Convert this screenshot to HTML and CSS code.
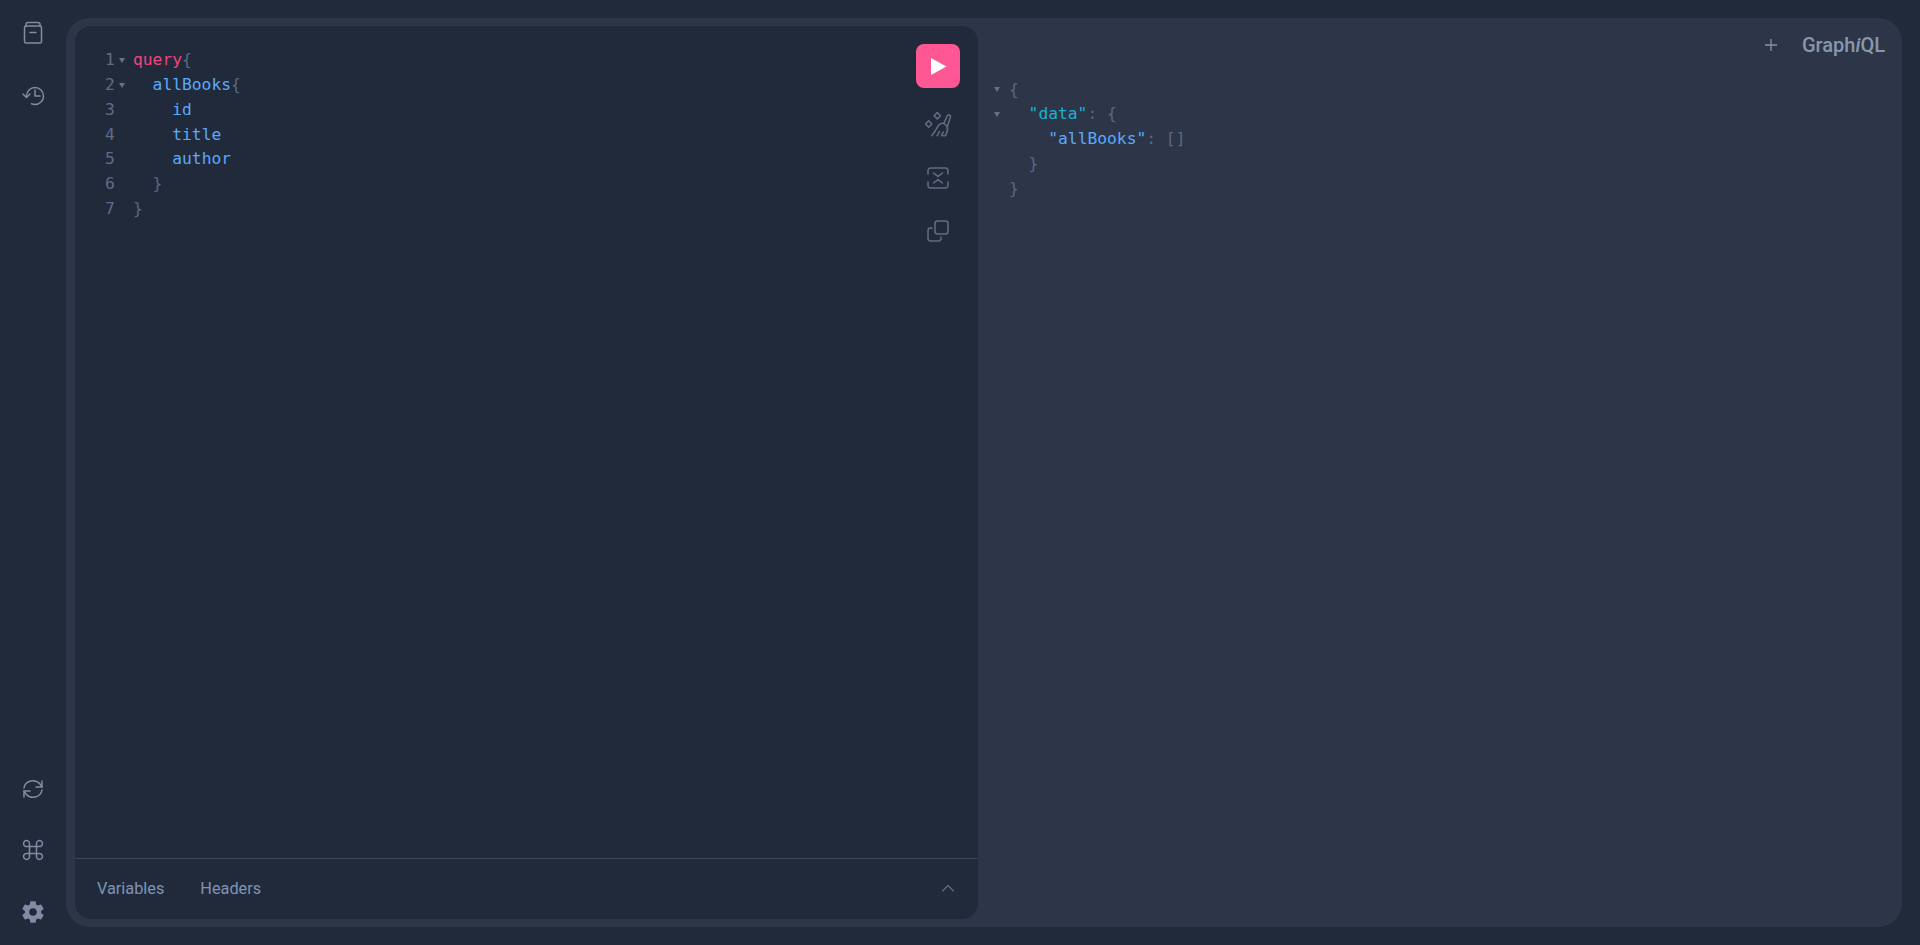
FILE: index.html
```html
<!DOCTYPE html>
<html lang="en">
<head>
<meta charset="utf-8">
<title>GraphiQL</title>
<link rel="stylesheet" href="styles.css">
</head>
<body>
<div class="app">
  <nav class="sidebar">
    <div class="side-group">
      <button class="side-btn"><svg class="ico" width="20" height="24" viewBox="0 0 20 24"><path d="M3 5V3.500A2 2 0 0 1 5 1.500h10a2 2 0 0 1 2 2V5"/><rect x="1.500" y="5" width="17" height="17" rx="1.500"/><path d="M7 11.500h6"/></svg></button>
      <button class="side-btn"><svg class="ico" width="24" height="22" viewBox="0 0 24 22"><path d="M5.500 12a8.500 8.500 0 1 1 8.500 8.500 9 9 0 0 1-3.500-.7"/><path d="M2 10l3.500 3.500L9 10"/><path d="M14 6v6h5"/></svg></button>
    </div>
    <div class="side-group">
      <button class="side-btn side-reload"><svg class="ico" width="22" height="20" viewBox="0 0 22 20"><path d="M2 9A9 8.500 0 0 1 18 5l2 3"/><path d="M20 2v6h-6"/><path d="M20 11A9 8.500 0 0 1 4 15l-2-3"/><path d="M2 18v-6h6"/></svg></button>
      <button class="side-btn"><svg class="ico" width="22" height="22" viewBox="0 0 22 22"><path d="M7.500 7.500h7v7h-7zM7.500 7.500H5a3 3 0 1 1 2.500-2.500zM14.500 7.500V5A3 3 0 1 1 17 7.500zM14.500 14.500H17a3 3 0 1 1-2.500 2.500zM7.500 14.500V17A3 3 0 1 1 5 14.500z"/></svg></button>
      <button class="side-btn"><svg class="gear" width="26" height="26" viewBox="0 0 24 24"><path d="M19.430 12.980c.040-.320.070-.640.070-.980s-.030-.660-.070-.980l2.110-1.650a.5.500 0 0 0 .120-.640l-2-3.460a.5.500 0 0 0-.610-.220l-2.490 1a7.300 7.300 0 0 0-1.690-.980l-.380-2.650A.49.490 0 0 0 14 2h-4a.49.490 0 0 0-.490.420l-.380 2.650c-.610.250-1.170.590-1.690.980l-2.490-1a.49.490 0 0 0-.610.220l-2 3.460a.49.490 0 0 0 .120.640l2.110 1.650c-.040.320-.070.650-.070.980s.030.660.070.980l-2.110 1.650a.5.500 0 0 0-.120.640l2 3.460c.120.220.390.300.610.220l2.490-1c.520.400 1.080.730 1.690.980l.380 2.650c.030.240.240.420.490.420h4c.250 0 .460-.180.490-.420l.380-2.650c.610-.250 1.170-.590 1.690-.980l2.490 1c.230.090.490 0 .610-.220l2-3.460a.5.500 0 0 0-.120-.640zM12 15.500a3.500 3.500 0 1 1 0-7 3.500 3.500 0 0 1 0 7z"/></svg></button>
    </div>
  </nav>
  <main class="session">
    <section class="query-panel">
      <div class="query-top">
        <div class="code query-code">
          <div class="line"><span class="num">1</span><span class="fold"></span><span class="kw">query</span><span class="p">{</span></div>
          <div class="line"><span class="num">2</span><span class="fold"></span>  <span class="f">allBooks</span><span class="p">{</span></div>
          <div class="line"><span class="num">3</span><span class="nofold"></span>    <span class="f">id</span></div>
          <div class="line"><span class="num">4</span><span class="nofold"></span>    <span class="f">title</span></div>
          <div class="line"><span class="num">5</span><span class="nofold"></span>    <span class="f">author</span></div>
          <div class="line"><span class="num">6</span><span class="nofold"></span>  <span class="p">}</span></div>
          <div class="line"><span class="num">7</span><span class="nofold"></span><span class="p">}</span></div>
        </div>
        <div class="toolbar">
          <button class="run"><svg width="16" height="17" viewBox="0 0 16 17"><path class="run-tri" d="M0 0l15.500 8.500L0 17z"/></svg></button>
          <button class="tool tool-broom"><svg class="ico ico-tool" width="28" height="26" viewBox="0 0 28 26"><path d="M3.700 8.800 6.900 12 3.700 15.200 .5 12zM12.300 .5 15.500 3.700 12.300 6.900 9.100 3.700z"/><path d="M19 11 22.300 3.700C23 2.400 25.700 3 25.500 4.600L22.300 15"/><path d="M6.700 23.700C9 21 11.500 17 13.300 13.700C15 11.500 17.500 11 19 11.500L22.300 14.500C22.800 17 22 21 20.500 23.700H18"/><path d="M12 23.700C13 22.500 13.800 21 14.500 19.500M16.500 23.700C17.200 22.500 17.700 21.200 18.200 20"/></svg></button>
          <button class="tool"><svg class="ico ico-tool" width="22" height="22" viewBox="0 0 22 22"><path d="M1 7V3.500A2.500 2.500 0 0 1 3.500 1h15A2.500 2.500 0 0 1 21 3.500V7M1 15v3.500A2.500 2.500 0 0 0 3.500 21h15a2.500 2.500 0 0 0 2.500-2.500V15"/><path d="M6.500 6 11 9.400 15.500 6M6.500 16 11 12.600 15.500 16"/></svg></button>
          <button class="tool"><svg class="ico ico-tool" width="22" height="22" viewBox="0 0 22 22"><rect x="8" y="1" width="13" height="13" rx="2.500"/><path d="M5 8H3.500A2.500 2.500 0 0 0 1 10.500v8A2.500 2.500 0 0 0 3.500 21h8a2.500 2.500 0 0 0 2.500-2.500V17"/></svg></button>
        </div>
      </div>
      <footer class="query-foot">
        <div class="tabs"><span class="tab">Variables</span><span class="tab">Headers</span></div>
        <svg class="ico chevron" width="14" height="8" viewBox="0 0 14 8"><path d="M1.500 7 7 1.500 12.500 7"/></svg>
      </footer>
    </section>
    <section class="result-panel">
      <header class="result-head">
        <svg class="ico plus" width="12" height="12" viewBox="0 0 12 12"><path d="M6 0v12M0 6h12"/></svg>
        <span class="logo">Graph<em>i</em>QL</span>
      </header>
      <div class="code result-code">
        <div class="line"><span class="fold"></span><span class="p">{</span></div>
        <div class="line"><span class="fold"></span>  <span class="s">"data"</span><span class="p">: {</span></div>
        <div class="line"><span class="nofold"></span>    <span class="f">"allBooks"</span><span class="p">: []</span></div>
        <div class="line"><span class="nofold"></span>  <span class="p">}</span></div>
        <div class="line"><span class="nofold"></span><span class="p">}</span></div>
      </div>
    </section>
  </main>
</div>
</body>
</html>
```
FILE: styles.css
```css
* { box-sizing: border-box; }
html, body { margin: 0; height: 100%; }
body { background: #212a3b; overflow: hidden; font-family: Roboto, sans-serif; }
button { border: 0; background: none; padding: 0; display: flex; align-items: center; justify-content: center; }
.app { display: flex; height: 945px; padding: 18px 18px 18px 0; }
.sidebar { width: 66px; flex: none; display: flex; flex-direction: column; justify-content: space-between; margin: -18px 0; padding: 2px 0 2px; }
.side-group { display: flex; flex-direction: column; }
.side-btn { height: 62px; width: 66px; }
.side-reload { padding-top: 2px; }
.ico { fill: none; stroke: #808ca3; stroke-width: 1.500; stroke-linecap: round; stroke-linejoin: round; }
.ico-tool { stroke: #626e84; }
.gear { fill: #808ca3; flex: none; }
.session { flex: 1; display: flex; background: #2d3648; border-radius: 24px; padding: 8px 8px 8px 9px; min-width: 0; }
.query-panel { width: 903px; flex: none; display: flex; flex-direction: column; background: #212a3b; border-radius: 16px; }
.query-top { flex: 1; display: flex; justify-content: space-between; min-height: 0; }
.code { font-family: "DejaVu Sans Mono", monospace; font-size: 16.300px; line-height: 24.750px; color: #5c6a82; }
.line { white-space: pre; height: 24.750px; }
.query-code { padding-top: 22.300px; padding-left: 30px; }
.num { display: inline-block; width: 8px; color: #5f6c84; }
.fold, .nofold { display: inline-block; width: 20px; }
.fold { position: relative; }
.fold::before { content: ""; position: absolute; left: 5.500px; top: -7.500px; border: 3.500px solid transparent; border-top: 5px solid #667187; border-bottom: 0; }
.kw { color: #f1447f; }
.f { color: #5aa9fa; }
.p { color: #5a6881; }
.s { color: #14b3d3; }
.toolbar { width: 62px; flex: none; display: flex; flex-direction: column; align-items: center; padding: 18px 18px 0 0; }
.run { width: 44px; height: 44px; flex: none; background: #ff5794; border-radius: 8px; padding-left: 2px; }
.run-tri { fill: #fff; }
.tool { width: 44px; height: 53px; flex: none; }
.tool-broom { padding-left: 2px; }
.run + .tool { margin-top: 10px; }
.query-foot { height: 61px; flex: none; border-top: 1px solid #3a4559; display: flex; align-items: center; justify-content: space-between; padding: 0 23px 2px 22px; }
.tabs { display: flex; gap: 36px; }
.tab { font-size: 16.300px; color: #7f93b3; }
.chevron { stroke: #5f6b82; stroke-width: 1.300; }
.result-panel { flex: 1; min-width: 0; display: flex; flex-direction: column; }
.result-head { height: 38px; flex: none; display: flex; align-items: center; justify-content: flex-end; padding-right: 9px; gap: 25px; }
.plus { stroke: #8793a9; stroke-width: 1.300; }
.logo { font-size: 20px; font-weight: 500; color: #8896b0; }
.logo em { font-style: italic; }
.result-code { padding: 13.500px 0 0 11px; }
.result-code .fold::before { left: 5px; }
```
